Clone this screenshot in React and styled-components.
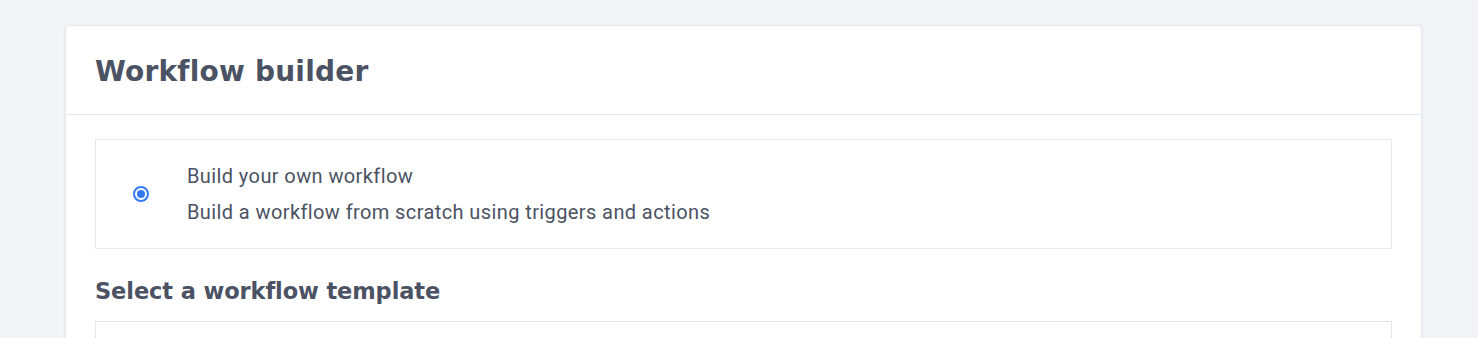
import React, { useState } from "react";
import styled, { createGlobalStyle } from "styled-components";

const GlobalStyle = createGlobalStyle`
  html, body {
    margin: 0;
    padding: 0;
    background: #f3f4f8;
    font-family: Roboto, "Liberation Sans", sans-serif;
    color: #4b5263;
  }
`;

const Page = styled.div`
  padding: 25px 56px 0 65px;
  height: 313px;
  overflow: hidden;
`;

const Card = styled.div`
  background: #fff;
  border: 1px solid #e6e7eb;
  border-radius: 4px;
  box-shadow: 0 1px 4px rgba(30, 40, 70, 0.06);
`;

const CardHeader = styled.div`
  height: 89px;
  padding: 3px 29px 0;
  box-sizing: border-box;
  display: flex;
  align-items: center;
  border-bottom: 1px solid #e6e7eb;
`;

const Title = styled.h1`
  margin: 0;
  font-family: "DejaVu Sans", "Noto Sans", sans-serif;
  font-weight: 700;
  font-size: 28px;
  letter-spacing: 0.2px;
  color: #4b5263;
`;

const CardBody = styled.div`
  padding: 24px 29px;
`;

const Option = styled.label`
  display: flex;
  align-items: center;
  border: 1px solid #e6e7eb;
  padding: 23px 37px;
  cursor: pointer;
`;

const Radio = styled.span`
  width: 16px;
  height: 16px;
  box-sizing: border-box;
  border-radius: 50%;
  border: 2px solid ${({ checked }) => (checked ? "#3478f6" : "#c3c7cf")};
  display: flex;
  align-items: center;
  justify-content: center;
  flex-shrink: 0;
  &::after {
    content: "";
    width: 8px;
    height: 8px;
    border-radius: 50%;
    background: ${({ checked }) => (checked ? "#3478f6" : "transparent")};
  }
`;

const OptionText = styled.div`
  margin-left: 38px;
  display: flex;
  flex-direction: column;
  gap: 10px;
  font-size: 20px;
  line-height: 26px;
  letter-spacing: 0.4px;
`;

const SectionTitle = styled.h2`
  margin: 28px 0 16px;
  font-family: "DejaVu Sans", "Noto Sans", sans-serif;
  font-weight: 700;
  font-size: 22.5px;
  line-height: 28px;
  letter-spacing: -0.1px;
  color: #4b5263;
`;

const TemplateBox = styled.div`
  border: 1px solid #e6e7eb;
  height: 120px;
`;

export default function App() {
  const [checked, setChecked] = useState(true);

  return (
    <>
      <GlobalStyle />
      <Page>
        <Card>
          <CardHeader>
            <Title>Workflow builder</Title>
          </CardHeader>
          <CardBody>
            <Option onClick={() => setChecked(true)}>
              <Radio checked={checked} />
              <OptionText>
                <span>Build your own workflow</span>
                <span>Build a workflow from scratch using triggers and actions</span>
              </OptionText>
            </Option>
            <SectionTitle>Select a workflow template</SectionTitle>
            <TemplateBox />
          </CardBody>
        </Card>
      </Page>
    </>
  );
}
